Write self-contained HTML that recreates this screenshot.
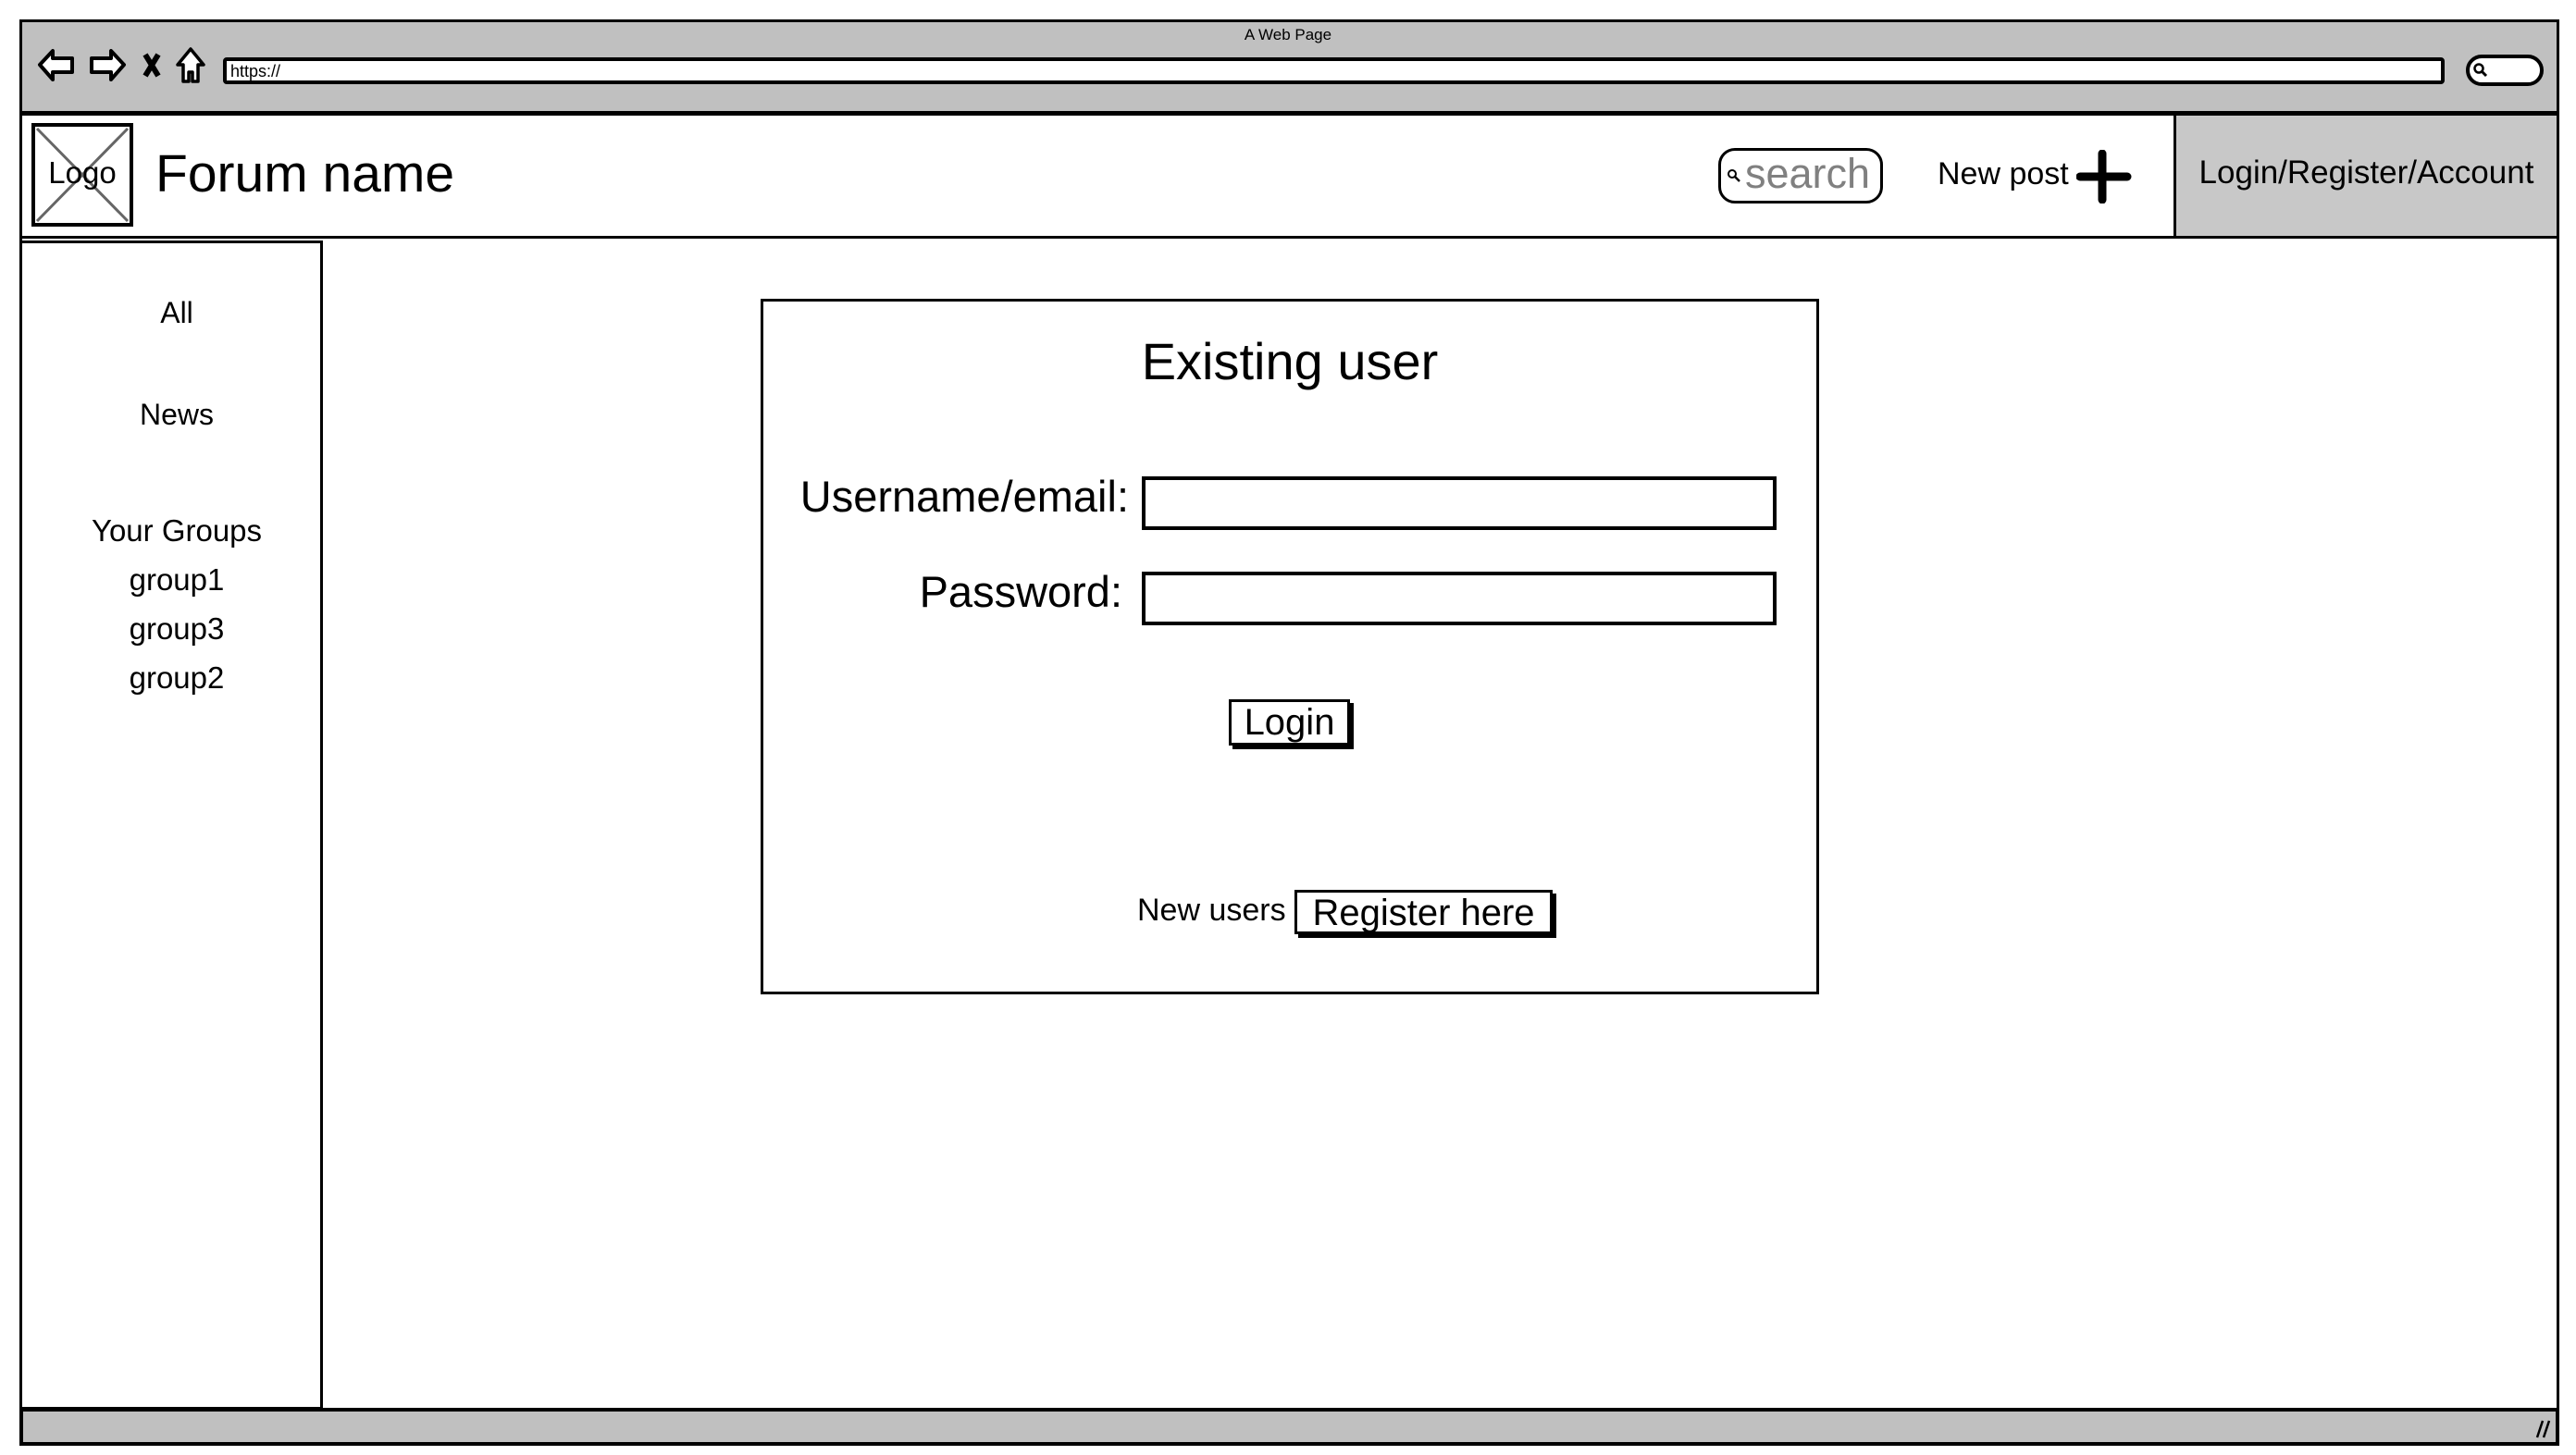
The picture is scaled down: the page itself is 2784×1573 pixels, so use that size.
<!DOCTYPE html>
<html><head><meta charset="utf-8"><style>
*{margin:0;padding:0;box-sizing:border-box}
body{width:2784px;height:1573px;background:#fff;position:relative;overflow:hidden;font-family:"Liberation Sans",sans-serif;color:#000}
.a{position:absolute}
.t{position:absolute;white-space:nowrap;line-height:1}
</style></head><body>
<div class="a" style="left:21px;top:21px;width:2745px;height:1542px;border:3px solid #000;background:#fff"></div>
<div class="a" style="left:21px;top:21px;width:2745px;height:102px;border:3px solid #000;background:#c0c0c0"></div>
<div class="t" style="left:0;width:2784px;text-align:center;top:29px;font-size:17px">A Web Page</div>
<svg class="a" style="left:40px;top:50px" width="190" height="42" viewBox="0 0 190 42">
 <path d="M3 20 L17 5 L17 13 L38 13 L38 28 L17 28 L17 36 Z" fill="#fff" stroke="#000" stroke-width="4" stroke-linejoin="round"/>
 <path d="M94 20 L80 5 L80 13 L59 13 L59 28 L80 28 L80 36 Z" fill="#fff" stroke="#000" stroke-width="4" stroke-linejoin="round"/>
 <path d="M117 9 L131 32 M131 9 L117 32" stroke="#000" stroke-width="6"/>
 <path d="M166 3 L180 20 L174 20 L174 38 L168 38 L168 28 L164 28 L164 38 L158 38 L158 20 L152 20 Z" fill="#fff" stroke="#000" stroke-width="3.5" stroke-linejoin="round"/>
</svg>
<div class="a" style="left:241px;top:62px;width:2401px;height:29px;border:4px solid #000;border-radius:4px;background:#fff"></div>
<div class="t" style="left:249px;top:68px;font-size:18px">https://</div>
<div class="a" style="left:2665px;top:59px;width:84px;height:34px;border:4px solid #000;border-radius:17px;background:#fff"></div>
<svg class="a" style="left:2672px;top:67px" width="18" height="18"><circle cx="7" cy="7" r="4.5" fill="none" stroke="#000" stroke-width="2.5"/><path d="M10 10 L15 15" stroke="#000" stroke-width="3"/></svg>
<div class="a" style="left:21px;top:122px;width:2745px;height:136px;border:3px solid #000;background:#fff"></div>
<div class="a" style="left:2349px;top:122px;width:417px;height:136px;border:3px solid #000;background:#c8c8c8"></div>
<div class="t" style="left:2349px;width:417px;text-align:center;top:169px;font-size:35px">Login/Register/Account</div>
<svg class="a" style="left:34px;top:133px" width="110" height="112"><rect x="2" y="2" width="106" height="108" fill="#fff" stroke="#000" stroke-width="4"/><path d="M6 6 L104 106 M104 6 L6 106" stroke="#666" stroke-width="3"/></svg>
<div class="t" style="left:34px;width:110px;text-align:center;top:170px;font-size:33px">Logo</div>
<div class="t" style="left:168px;top:160px;font-size:57px">Forum name</div>
<div class="a" style="left:1857px;top:160px;width:178px;height:60px;border:3px solid #000;border-radius:18px;background:#fff"></div>
<svg class="a" style="left:1866px;top:182px" width="16" height="16"><circle cx="6" cy="6" r="4" fill="none" stroke="#000" stroke-width="2"/><path d="M9 9 L14 14" stroke="#000" stroke-width="2.5"/></svg>
<div class="t" style="left:1886px;top:165px;font-size:45px;color:#808080">search</div>
<div class="t" style="left:2094px;top:171px;font-size:34px">New post</div>
<svg class="a" style="left:2244px;top:162px" width="60" height="58"><path d="M28 4 L28 54 M4 29 L55 29" stroke="#000" stroke-width="9" stroke-linecap="round"/></svg>
<div class="a" style="left:21px;top:260px;width:328px;height:1264px;border:3px solid #000;background:#fff"></div>
<div class="t" style="left:21px;width:340px;text-align:center;top:322px;font-size:32px">All</div>
<div class="t" style="left:21px;width:340px;text-align:center;top:432px;font-size:32px">News</div>
<div class="t" style="left:21px;width:340px;text-align:center;top:557px;font-size:33px">Your Groups</div>
<div class="t" style="left:21px;width:340px;text-align:center;top:610px;font-size:33px">group1</div>
<div class="t" style="left:21px;width:340px;text-align:center;top:663px;font-size:33px">group3</div>
<div class="t" style="left:21px;width:340px;text-align:center;top:716px;font-size:33px">group2</div>
<div class="a" style="left:21px;top:1522px;width:2745px;height:41px;border:4px solid #000;background:#c0c0c0"></div>
<svg class="a" style="left:2738px;top:1530px" width="24" height="28"><path d="M4 24 L10 6 M11 24 L17 6" stroke="#000" stroke-width="2.5"/></svg>
<div class="a" style="left:822px;top:323px;width:1144px;height:752px;border:3px solid #000;background:#fff"></div>
<div class="t" style="left:822px;width:1144px;text-align:center;top:363px;font-size:56px">Existing user</div>
<div class="t" style="left:620px;width:600px;text-align:right;top:513px;font-size:47px">Username/email:</div>
<div class="a" style="left:1234px;top:515px;width:686px;height:58px;border:4px solid #000;background:#fff"></div>
<div class="t" style="left:613px;width:600px;text-align:right;top:616px;font-size:47px">Password:</div>
<div class="a" style="left:1234px;top:618px;width:686px;height:58px;border:4px solid #000;background:#fff"></div>
<div class="a" style="left:1328px;top:756px;width:131px;height:50px;border:3px solid #000;box-shadow:4px 4px 0 #000;background:#fff"></div>
<div class="t" style="left:1328px;width:131px;text-align:center;top:761px;font-size:40px">Login</div>
<div class="t" style="left:1229px;top:967px;font-size:34px">New users</div>
<div class="a" style="left:1399px;top:962px;width:279px;height:48px;border:3px solid #000;box-shadow:4px 4px 0 #000;background:#fff"></div>
<div class="t" style="left:1399px;width:279px;text-align:center;top:967px;font-size:40px">Register here</div>
</body></html>
